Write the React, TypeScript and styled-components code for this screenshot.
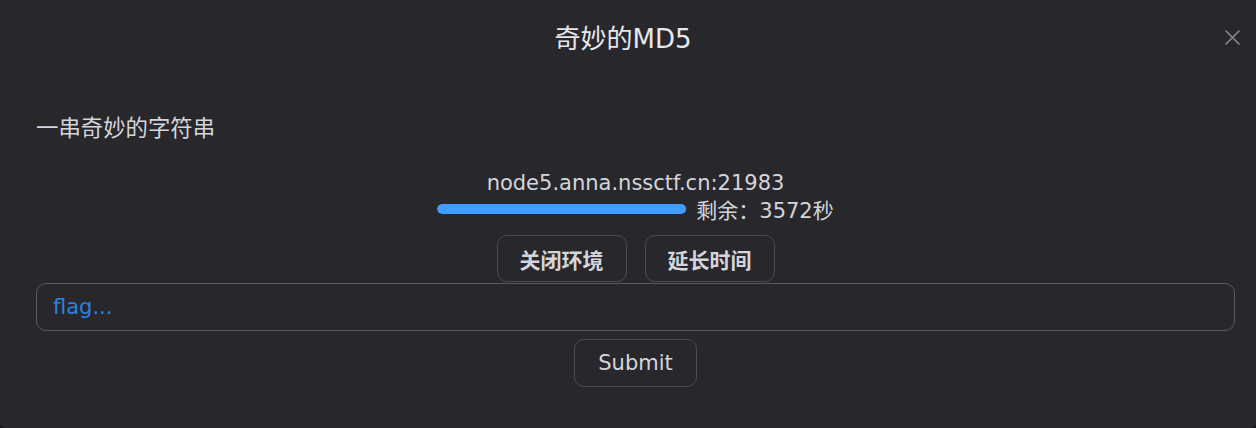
import React from "react";
import styled, { createGlobalStyle } from "styled-components";

const Global = createGlobalStyle`
  html, body { margin: 0; padding: 0; background: #18181b; }
  body { font-family: "DejaVu Sans", "Noto Sans CJK SC", sans-serif; }
  * { box-sizing: border-box; }
`;

const Modal = styled.div`
  width: 1256px;
  height: 428px;
  background: #28272c;
  border-radius: 0 0 5px 5px;
  color: #d4d5db;
  display: flex;
  flex-direction: column;
`;

const Header = styled.div`
  display: flex;
  align-items: center;
  gap: 10px;
  padding: 22px 12px 0 36px;
`;

const Title = styled.div`
  flex: 1;
  text-align: center;
  font-size: 26px;
  line-height: 34px;
  color: #e6e7ec;
`;

const Close = styled.button`
  width: 24px;
  height: 24px;
  padding: 0;
  border: none;
  background: transparent;
  display: flex;
  align-items: center;
  justify-content: center;
  margin-top: -4px;
  cursor: pointer;
`;

const Body = styled.div`
  display: flex;
  flex-direction: column;
  padding: 0 21px 0 36px;
`;

const Desc = styled.div`
  font-size: 22.4px;
  line-height: 30px;
  margin-top: 57px;
`;

const Host = styled.div`
  text-align: center;
  font-size: 21px;
  line-height: 26px;
  margin-top: 27px;
`;

const TimerRow = styled.div`
  display: flex;
  justify-content: center;
  align-items: center;
  gap: 8px;
  height: 26px;
  font-size: 21px;
`;

const Track = styled.div`
  width: 251px;
  height: 10px;
  border-radius: 5px;
  background: #2f2f35;
  overflow: hidden;
`;

const Fill = styled.div`
  height: 100%;
  border-radius: 5px;
  background: #409efe;
`;

const ButtonRow = styled.div`
  display: flex;
  justify-content: center;
  gap: 18px;
  margin-top: 13px;
`;

const Btn = styled.button<{ $bold?: boolean }>`
  height: 47px;
  padding: 0 ${(p) => (p.$bold ? "22px" : "23px")};
  border: 1px solid #4c4c52;
  border-radius: 10px;
  background: transparent;
  color: #d4d5db;
  font-family: "DejaVu Sans", "Noto Sans CJK SC", sans-serif;
  font-size: 21px;
  font-weight: ${(p) => (p.$bold ? 700 : 400)};
`;

const Input = styled.input`
  margin-top: 1px;
  height: 48px;
  width: 100%;
  border: 1px solid #5a5a60;
  border-radius: 10px;
  background: transparent;
  padding: 0 16px;
  font-family: "DejaVu Sans", "Noto Sans CJK SC", sans-serif;
  font-size: 21px;
  color: #d4d5db;
  outline: none;
  &::placeholder {
    color: #2a82e0;
  }
`;

const SubmitRow = styled.div`
  display: flex;
  justify-content: center;
  margin-top: 8px;
`;

const Submit = styled(Btn)`
  height: 48px;
  padding: 0 23px;
`;

export default function App() {
  const remaining = 3572;
  const total = 3600;
  return (
    <>
      <Global />
      <Modal>
        <Header>
          <Title>奇妙的MD5</Title>
          <Close aria-label="close">
            <svg width="15" height="15" viewBox="0 0 15 15">
              <path d="M1 1 L14 14 M14 1 L1 14" stroke="#8c8c92" strokeWidth="1.5" strokeLinecap="round" />
            </svg>
          </Close>
        </Header>
        <Body>
          <Desc>一串奇妙的字符串</Desc>
          <Host>node5.anna.nssctf.cn:21983</Host>
          <TimerRow>
            <Track>
              <Fill style={{ width: `${(remaining / total) * 100}%` }} />
            </Track>
            <span>剩余：{remaining}秒</span>
          </TimerRow>
          <ButtonRow>
            <Btn $bold>关闭环境</Btn>
            <Btn $bold>延长时间</Btn>
          </ButtonRow>
          <Input placeholder="flag..." />
          <SubmitRow>
            <Submit>Submit</Submit>
          </SubmitRow>
        </Body>
      </Modal>
    </>
  );
}
